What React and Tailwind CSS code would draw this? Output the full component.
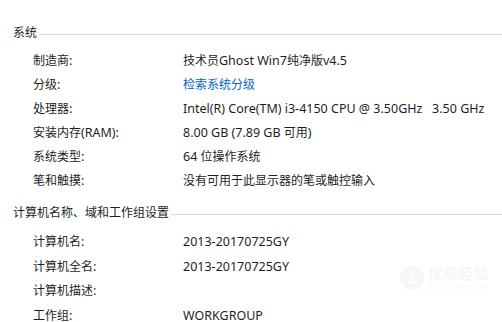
import React from "react";

const font = {
  fontFamily: '"Noto Sans", "Noto Sans CJK SC", sans-serif',
};

// latin runs render a little wider than CJK in the original, so size them separately
function Mixed({ text }) {
  const parts = text.match(/[\u0000-\u024f]+|[^\u0000-\u024f]+/g) || [];
  return (
    <span className="whitespace-pre">
      {parts.map((p, i) =>
        /^[\u0000-\u024f]+$/.test(p) ? (
          <span key={i} className="text-[12.5px]">{p}</span>
        ) : (
          <span key={i}>{p}</span>
        )
      )}
    </span>
  );
}

function SectionHeader({ title, className }) {
  return (
    <div className={"flex items-center h-4 pl-[13px] " + className}>
      <span className="text-[12px] leading-4 text-[#1e1e1e] whitespace-nowrap">{title}</span>
      <div className="flex-1 h-px bg-[#d9d9d9] ml-[2px] mt-[3px]"></div>
    </div>
  );
}

function Row({ label, value, link, tall }) {
  return (
    <div className={"flex items-center pl-[33px] text-[12px] whitespace-nowrap " + (tall ? "h-[24.6px]" : "h-6")}>
      <div className="w-[150px] text-[#1e1e1e]">
        <Mixed text={label} />
      </div>
      <div className={link ? "text-[#0066cc]" : "text-[#1e1e1e]"}>
        <Mixed text={value} />
      </div>
    </div>
  );
}

const system = [
  ["制造商:", "技术员Ghost Win7纯净版v4.5"],
  ["分级:", "检索系统分级", true],
  ["处理器:", "Intel(R) Core(TM) i3-4150 CPU @ 3.50GHz   3.50 GHz"],
  ["安装内存(RAM):", "8.00 GB (7.89 GB 可用)"],
  ["系统类型:", "64 位操作系统"],
  ["笔和触摸:", "没有可用于此显示器的笔或触控输入"],
];

const computer = [
  ["计算机名:", "2013-20170725GY"],
  ["计算机全名:", "2013-20170725GY"],
  ["计算机描述:", ""],
  ["工作组:", "WORKGROUP"],
];

export default function App() {
  return (
    <div className="w-[502px] h-[322px] bg-white overflow-hidden relative" style={font}>
      <SectionHeader title="系统" className="mt-[25px]" />
      <div className="mt-[8px]">
        {system.map(([l, v, link]) => (
          <Row key={l} label={l} value={v} link={link} />
        ))}
      </div>
      <SectionHeader title="计算机名称、域和工作组设置" className="mt-[12px]" />
      <div className="mt-[9px]">
        {computer.map(([l, v]) => (
          <Row key={l} label={l} value={v} tall />
        ))}
      </div>
      <div className="absolute left-[400px] top-[266px] flex items-center gap-1 opacity-[0.03] whitespace-nowrap">
        <div className="w-[24px] h-[24px] rounded-full bg-black text-white text-[15px] font-bold flex items-center justify-center">S</div>
        <div className="flex flex-col leading-none">
          <span className="text-[15px] text-black font-bold">优质经验</span>
          <span className="text-[7px] text-black mt-[2px]">jingyan.baidu.com</span>
        </div>
      </div>
    </div>
  );
}
